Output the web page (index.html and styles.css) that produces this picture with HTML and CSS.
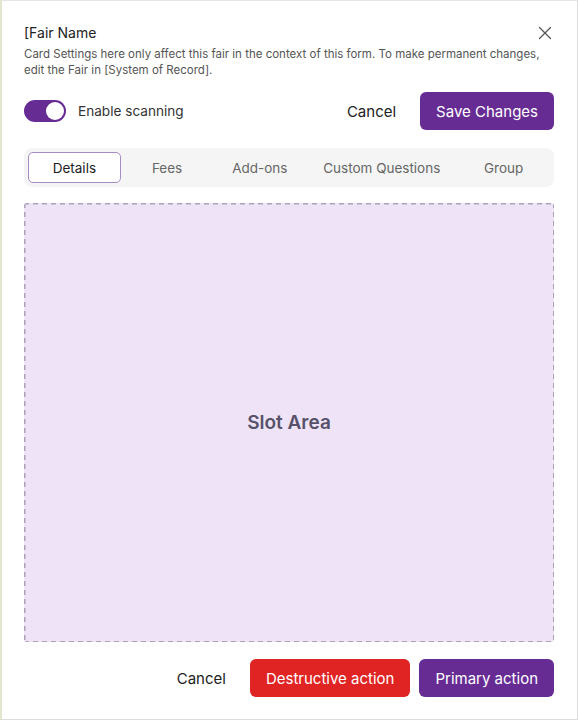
FILE: index.html
```html
<!DOCTYPE html>
<html lang="en">
<head>
<meta charset="utf-8">
<link rel="stylesheet" href="styles.css">
</head>
<body>
<div class="card">
  <div class="header">
    <div class="title">[Fair Name</div>
    <button class="close" aria-label="Close">
      <svg width="14" height="14" viewBox="0 0 14 14"><path d="M1.5 1.5 L12.5 12.5 M12.5 1.5 L1.5 12.5" stroke="#555" stroke-width="1.3" fill="none" stroke-linecap="round"/></svg>
    </button>
  </div>
  <p class="desc">Card Settings here only affect this fair in the context of this form. To make permanent changes, edit the Fair in [System of Record].</p>
  <div class="toolbar">
    <label class="toggle-wrap">
      <span class="toggle"><span class="knob"></span></span>
      <span class="toggle-label">Enable scanning</span>
    </label>
    <div class="actions">
      <button class="btn btn-ghost">Cancel</button>
      <button class="btn btn-primary">Save Changes</button>
    </div>
  </div>
  <div class="tabs">
    <div class="tab active">Details</div>
    <div class="tab">Fees</div>
    <div class="tab">Add-ons</div>
    <div class="tab">Custom Questions</div>
    <div class="tab">Group</div>
  </div>
  <div class="slot">Slot Area</div>
  <div class="footer">
    <button class="btn btn-ghost">Cancel</button>
    <button class="btn btn-danger">Destructive action</button>
    <button class="btn btn-primary">Primary action</button>
  </div>
</div>
</body>
</html>
```
FILE: styles.css
```css
* { box-sizing: border-box; }
html, body { margin: 0; padding: 0; background: #fff; }
body { font-family: Inter, "Noto Sans", sans-serif; color: #222; }
.card {
  width: 578px;
  height: 720px;
  border: 1px solid #dcdcdc;
  border-left: 2px solid #e3e6cf;
  border-top-color: #e6e6e0;
  padding: 20px 23px 22px 22px;
  display: flex;
  flex-direction: column;
}
.header { display: flex; justify-content: space-between; align-items: center; height: 24px; }
.title { font-size: 14px; line-height: 24px; color: #222; }
.close { border: 0; background: none; padding: 0; width: 14px; height: 14px; margin-right: 2px; display: flex; cursor: pointer; }
.desc { margin: 1px 0 0; font-size: 11.5px; line-height: 16px; color: #555; }
.toolbar { margin-top: 14px; display: flex; justify-content: space-between; align-items: center; height: 38px; }
.toggle-wrap { display: flex; align-items: center; gap: 12px; }
.toggle { width: 42px; height: 22px; border-radius: 11px; background: #672c94; position: relative; display: block; }
.knob { position: absolute; right: 2px; top: 2px; width: 18px; height: 18px; border-radius: 50%; background: #fff; }
.toggle-label { font-size: 13.6px; color: #333; }
.actions { display: flex; align-items: center; gap: 24px; }
.btn { font-family: inherit; font-size: 15px; border: 0; height: 38px; border-radius: 6px; padding: 0 16px; cursor: pointer; }
.btn-ghost { background: none; color: #222; padding: 0; }
.btn-primary { background: #672c94; color: #fff; }
.btn-danger { background: #e02424; color: #fff; }
.tabs { margin-top: 18px; background: #f5f5f5; border-radius: 8px; padding: 4px; display: flex; height: 39px; }
.tab { flex: 1 1 0; padding: 0 16px; text-align: center; font-size: 13.5px; color: #666; line-height: 30px; white-space: nowrap; border: 1px solid transparent; border-radius: 5px; }
.tab.active { background: #fff; border-color: #a68cc4; color: #222; }
.slot {
  margin-top: 16px;
  flex: 1;
  background-color: #efe4f7;
  background-image:
    repeating-linear-gradient(90deg, #aba2b6 0 5px, transparent 5px 9px),
    repeating-linear-gradient(90deg, #aba2b6 0 5px, transparent 5px 9px),
    repeating-linear-gradient(180deg, #aba2b6 0 5px, transparent 5px 9px),
    repeating-linear-gradient(180deg, #aba2b6 0 5px, transparent 5px 9px);
  background-size: 100% 1.5px, 100% 1.5px, 1.5px 100%, 1.5px 100%;
  background-position: 0 0, 0 100%, 0 0, 100% 0;
  background-repeat: no-repeat;
  border-radius: 3px;
  display: flex;
  align-items: center;
  justify-content: center;
  font-size: 19px;
  font-weight: 600;
  color: #57526a;
}
.footer { margin-top: 17px; display: flex; justify-content: flex-end; align-items: center; gap: 9px; }
.footer .btn-ghost { margin-right: 15px; }
```
